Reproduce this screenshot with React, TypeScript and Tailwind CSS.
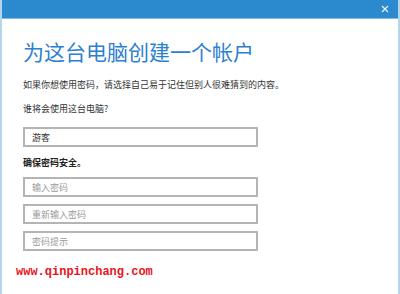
import React from "react";

const cjk = { fontFamily: '"Noto Sans CJK SC", "Noto Sans", sans-serif' };

function Field({ value, placeholder }: { value?: string; placeholder?: string }) {
  return (
    <div className="w-[235px] h-[20px] border-2 border-[#b4b4b4] bg-white flex items-center pl-[7px]">
      <span className={value ? "text-[9px] leading-none text-[#333]" : "text-[9px] leading-none text-[#9a9a9a]"}>
        {value ?? placeholder}
      </span>
    </div>
  );
}

export default function App() {
  return (
    <div
      className="w-[400px] h-[294px] bg-white border-l-2 border-r-2 border-[#b4d6ee] flex flex-col overflow-hidden"
      style={cjk}
    >
      <div className="h-[19px] shrink-0 bg-[#2b8ace] border-b border-[#7fbde6] flex items-center justify-end pr-[9px]">
        <svg width="8" height="8" viewBox="0 0 8 8">
          <path d="M1 1 L7 7 M7 1 L1 7" stroke="#e8f3fb" strokeWidth="1.2" />
        </svg>
      </div>
      <div className="flex flex-col pl-[21px]">
        <div className="mt-[20px] text-[21px] leading-[24px] text-[#2c80cf] font-normal">为这台电脑创建一个帐户</div>
        <div className="mt-[16px] text-[9px] leading-[12px] text-[#333]">如果你想使用密码，请选择自己易于记住但别人很难猜到的内容。</div>
        <div className="mt-[12px] text-[9px] leading-[12px] text-[#333]">谁将会使用这台电脑?</div>
        <div className="mt-[12px]">
          <Field value="游客" />
        </div>
        <div className="mt-[10px] text-[9px] leading-[12px] text-[#222] font-bold">确保密码安全。</div>
        <div className="mt-[8px] flex flex-col gap-[7px]">
          <Field placeholder="输入密码" />
          <Field placeholder="重新输入密码" />
          <Field placeholder="密码提示" />
        </div>
        <div
          className="mt-[14px] -ml-[7px] text-[12px] leading-[14px] text-[#e8141c] font-bold"
          style={{ fontFamily: '"Liberation Mono", monospace' }}
        >
          www.qinpinchang.com
        </div>
      </div>
    </div>
  );
}
